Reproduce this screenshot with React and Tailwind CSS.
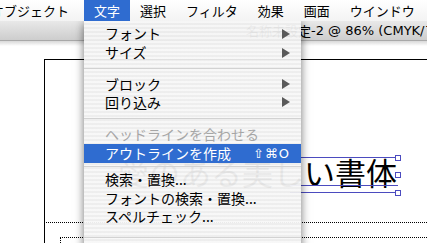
import React from "react";

const Arrow = () => (
  <svg width="8" height="10" viewBox="0 0 8 10" className="shrink-0">
    <polygon points="0,0 8,5 0,10" fill="#5a5a5a" />
  </svg>
);

const items = [
  { t: "フォント", arrow: true, h: "h-[19px]" },
  { t: "サイズ", arrow: true, h: "h-[19px]" },
  { sep: true, h: "h-[13px]" },
  { t: "ブロック", arrow: true, h: "h-[18px]" },
  { t: "回り込み", arrow: true, h: "h-[18px]" },
  { sep: true, h: "h-[14px]" },
  { t: "ヘッドラインを合わせる", disabled: true, h: "h-[19px]" },
  { t: "アウトラインを作成", hl: true, shortcut: "⇧⌘O", h: "h-[19px]" },
  { sep: true, h: "h-[7px]" },
  { t: "検索・置換...", h: "h-[19px]" },
  { t: "フォントの検索・置換...", h: "h-[18px]" },
  { t: "スペルチェック...", h: "h-[18px]" },
  { sep: true, h: "h-[24px]" },
];

const menuBar = ["文字", "選択", "フィルタ", "効果", "画面", "ウインドウ"];

export default function App() {
  return (
    <div className="relative w-[427px] h-[243px] overflow-hidden bg-white flex flex-col font-['Noto_Sans_CJK_JP','DejaVu_Sans',sans-serif]">
      {/* menu bar */}
      <div className="relative z-20 h-[21px] shrink-0 flex items-stretch bg-gradient-to-b from-white to-[#f3f3f3] text-[13px] text-black">
        <div className="flex -ml-[19px]">
          <div className="pl-[10px] pr-[15px] flex items-center whitespace-nowrap">オブジェクト</div>
          {menuBar.map((m) => (
            <div
              key={m}
              className={
                m === "文字"
                  ? "px-[10px] flex items-center bg-[#2f6cd0] text-white whitespace-nowrap"
                  : "px-[10px] flex items-center whitespace-nowrap"
              }
            >
              {m}
            </div>
          ))}
        </div>
      </div>

      {/* window title bar */}
      <div className="h-[20px] shrink-0 flex items-center bg-gradient-to-b from-[#e9e9e9] to-[#cdcdcd] border-b border-[#a8a8a8] text-[13px] text-black whitespace-nowrap pl-[246px] font-['DejaVu_Sans','Noto_Sans_CJK_JP',sans-serif]">
        <span className="font-['Noto_Sans_CJK_JP',sans-serif]">名称未設定</span>
        <span>-2 @ 86% (CMYK/プレビュー)</span>
      </div>

      {/* document canvas */}
      <div className="relative flex-1 bg-white">
        <div className="absolute left-0 right-0 top-0 h-[5px] bg-gradient-to-b from-[#d8d8d8] to-white" />
        <div className="absolute left-[44px] top-[18px] w-[500px] h-[400px] border border-black" />
        <div className="absolute left-[44px] right-0 top-[181px] border-t border-dotted border-black" />
        <div className="absolute left-[60px] right-0 top-[196px] h-[40px] border-t border-l border-dotted border-black" />

        {/* text object */}
        <div className="absolute left-[118px] top-[115px] text-[31px] leading-[31px] text-black whitespace-nowrap font-['Noto_Sans_CJK_JP',sans-serif]">
          愛のある美しい書体
        </div>
        {/* selection */}
        <div className="absolute left-[290px] top-[116px] w-[108px] h-[36px] border-t border-b border-[#4b4bbf]" />
        <div className="absolute left-[290px] top-[144px] w-[108px] h-px bg-[#4b4bbf]" />
        <div className="absolute left-[395px] top-[114px] w-[6px] h-[6px] bg-white border border-[#4b4bbf]" />
        <div className="absolute left-[395px] top-[131px] w-[6px] h-[6px] bg-white border border-[#4b4bbf]" />
        <div className="absolute left-[395px] top-[149px] w-[6px] h-[6px] bg-white border border-[#4b4bbf]" />
      </div>

      {/* dropdown menu */}
      <div className="absolute z-10 left-[84px] top-[21px] w-[217px] h-[260px] pt-[3px] flex flex-col shadow-[0_2px_9px_rgba(0,0,0,0.55)] bg-[repeating-linear-gradient(180deg,rgba(247,247,247,0.95)_0px,rgba(247,247,247,0.95)_2px,rgba(237,237,237,0.95)_2px,rgba(237,237,237,0.95)_4px)] text-[14px]">
        {items.map((it, i) =>
          it.sep ? (
            <div key={i} className={`${it.h} flex items-center shrink-0`}>
              <div className="w-full h-px bg-[#d2d2d2]" />
            </div>
          ) : (
            <div
              key={i}
              className={`${it.h} shrink-0 flex items-center pl-[21px] pr-[11px] whitespace-nowrap ${
                it.hl ? "bg-[#2f6cd0] text-white" : it.disabled ? "text-[#a6a6a6]" : "text-black"
              }`}
            >
              <span className="flex-1">{it.t}</span>
              {it.arrow && <Arrow />}
              {it.shortcut && (
                <span className="font-['DejaVu_Sans',sans-serif] text-[13px] tracking-[1px]">{it.shortcut}</span>
              )}
            </div>
          )
        )}
      </div>
    </div>
  );
}
